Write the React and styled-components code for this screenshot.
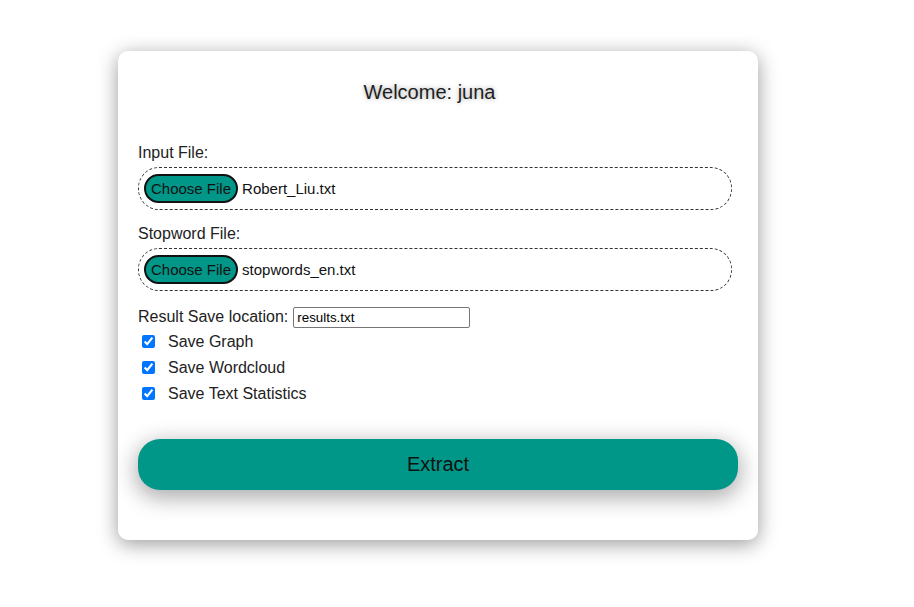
import React from "react";
import styled, { createGlobalStyle } from "styled-components";

const Global = createGlobalStyle`
  html, body { margin: 0; padding: 0; background: #fff; }
  body { font-family: "Liberation Sans", Arial, sans-serif; color: #222; }
  * { box-sizing: border-box; }
`;

const Page = styled.div`
  width: 914px;
  height: 607px;
  padding: 51px 0 0 118px;
`;

const Card = styled.div`
  width: 640px;
  height: 489px;
  background: #fff;
  border-radius: 10px;
  box-shadow: 0 4px 20px rgba(0, 0, 0, 0.4);
  padding: 30px 20px 50px 20px;
  display: flex;
  flex-direction: column;
`;

const Title = styled.h1`
  margin: 0 0 39px 0;
  padding-right: 17px;
  font-size: 20px;
  font-weight: 400;
  line-height: 23px;
  text-align: center;
  color: #1e1e1e;
  text-shadow: 0 0 5px rgba(0, 0, 0, 0.35);
`;

const FieldLabel = styled.div`
  font-size: 16px;
  line-height: 18px;
  padding-top: 1px;
`;

const FileBox = styled.div`
  margin-top: 5px;
  width: 594px;
  height: 43px;
  border: 1px dashed #333;
  border-radius: 21px;
  display: flex;
  align-items: center;
  padding-left: 5px;
  gap: 4px;
  margin-bottom: ${(p) => p.$mb}px;
`;

const ChooseButton = styled.button`
  height: 29px;
  padding: 0 5px;
  background: #009688;
  border: 2px solid #111;
  border-radius: 15px;
  font-family: "Liberation Sans", Arial, sans-serif;
  font-size: 15px;
  color: #111;
  cursor: pointer;
`;

const FileName = styled.span`
  font-size: 15px;
  color: #111;
`;

const SaveRow = styled.div`
  display: flex;
  align-items: center;
  height: 22px;
  font-size: 16px;
  gap: 5px;
`;

const TextInput = styled.input`
  width: 177px;
  height: 21px;
  border: 1px solid #767676;
  border-radius: 2px;
  padding: 1px 3px;
  font-family: "Liberation Sans", Arial, sans-serif;
  font-size: 13.33px;
  color: #000;
`;

const CheckRow = styled.label`
  display: flex;
  align-items: center;
  height: 26px;
  font-size: 16px;
  input {
    width: 13px;
    height: 13px;
    margin: 0 13px 0 4px;
  }
  span {
    padding-top: 2px;
  }
`;

const ExtractButton = styled.button`
  margin-top: 33px;
  width: 600px;
  height: 51px;
  background: #009688;
  border: none;
  border-radius: 22px;
  font-family: "Liberation Sans", Arial, sans-serif;
  font-size: 20px;
  color: #111;
  box-shadow: 0 6px 22px 2px rgba(0, 0, 0, 0.33);
  cursor: pointer;
`;

function FileField({ label, file, mb }) {
  return (
    <>
      <FieldLabel>{label}</FieldLabel>
      <FileBox $mb={mb}>
        <ChooseButton type="button">Choose File</ChooseButton>
        <FileName>{file}</FileName>
      </FileBox>
    </>
  );
}

export default function App() {
  return (
    <Page>
      <Global />
      <Card>
        <Title>Welcome: juna</Title>
        <FileField label="Input File:" file="Robert_Liu.txt" mb={14} />
        <FileField label="Stopword File:" file="stopwords_en.txt" mb={15} />
        <SaveRow>
          Result Save location:
          <TextInput defaultValue="results.txt" />
        </SaveRow>
        {["Save Graph", "Save Wordcloud", "Save Text Statistics"].map((t) => (
          <CheckRow key={t}>
            <input type="checkbox" defaultChecked />
            <span>{t}</span>
          </CheckRow>
        ))}
        <ExtractButton type="button">Extract</ExtractButton>
      </Card>
    </Page>
  );
}
